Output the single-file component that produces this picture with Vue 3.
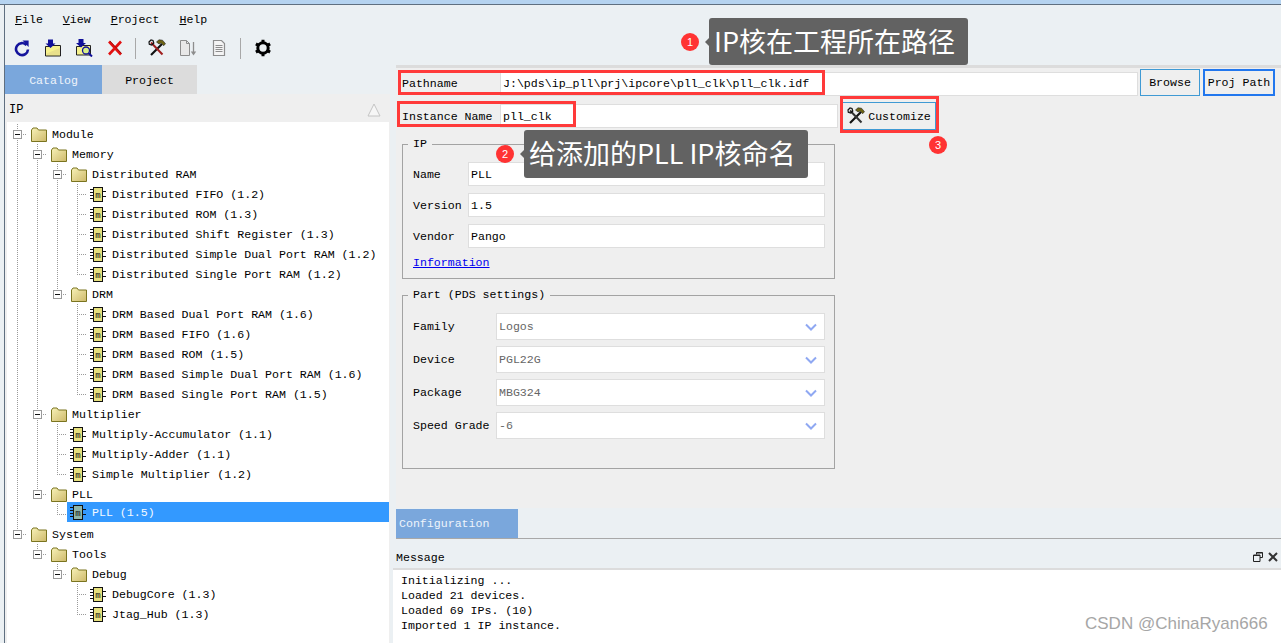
<template>
  <div class="app">
    <div class="desk-strip"></div>
    <div class="window">
      <header class="topbar">
        <nav class="menu">
          <span v-for="m in menus" :key="m" class="menu-item"><u>{{ m[0] }}</u>{{ m.slice(1) }}</span>
        </nav>
        <div class="toolbar">
          <span class="tool">
            <svg width="18" height="18" viewBox="0 0 18 18"><path d="M13.6 6.2A6 6 0 1 0 15 10.5" fill="none" stroke="#14149c" stroke-width="2.6"/><path d="M9.5 1.5 15.6 1.5 15.6 8 Z" fill="#14149c"/></svg>
          </span>
          <span class="tool">
            <svg width="18" height="18" viewBox="0 0 18 18"><path d="M1.5 7.5h5l1-1h9v10.500h-15z" fill="#f6f28c" stroke="#222" stroke-width="1"/><path d="M2.500 14.500 L16 9v7H2.500z" fill="#e8e08a"/><path d="M4 0.500h5v4h2.500L6.500 9 1.500 4.500H4z" fill="#10109a"/></svg>
          </span>
          <span class="tool">
            <svg width="18" height="18" viewBox="0 0 18 18"><path d="M1.500 7.500h5l1-1h8v9.500h-14z" fill="#f6f28c" stroke="#222" stroke-width="1"/><path d="M3.500 0h5v4h2.500L6 8.500 1 4h2.500z" fill="#10109a"/><circle cx="11" cy="11.500" r="3.500" fill="#d8f088" stroke="#10109a" stroke-width="1.300"/><path d="m13.500 14 3.500 3.500" stroke="#10109a" stroke-width="2"/></svg>
          </span>
          <span class="tool">
            <svg width="18" height="18" viewBox="0 0 18 18"><path d="M3 2.500 15 15.500M15 2.500 3 15.500" stroke="#e21010" stroke-width="2.600"/><path d="M4 2 15.500 14.500" stroke="#700" stroke-width=".6"/></svg>
          </span>
          <span class="sep sep-a"></span>
          <span class="tool">
            <svg width="18" height="18" viewBox="0 0 18 18"><path d="M3 16 14 5" stroke="#111" stroke-width="2.200"/><path d="M3 3.500 14.500 15.500" stroke="#a02020" stroke-width="2"/><path d="M8.500 3 11 .8l3.500.4 3 3.500-1.800 2-2.500-2.600-2.200.8z" fill="#6e6414" stroke="#222" stroke-width=".6"/><path d="M1 3 3 1l2 .5.800 2.500-2 2-2.500-.8z" fill="none" stroke="#111" stroke-width="1.200"/></svg>
          </span>
          <span class="tool">
            <svg width="18" height="18" viewBox="0 0 18 18"><path d="M1.500 1.500h6l3 3v12h-9z" fill="#e8e8e8" stroke="#8d8d8d"/><path d="M7.500 1.500v3h3" fill="none" stroke="#8d8d8d"/><path d="M14.500 3v12" stroke="#8d8d8d" stroke-width="1.300"/><path d="M11.800 12.500h5.400L14.500 16.500z" fill="#8d8d8d"/></svg>
          </span>
          <span class="tool">
            <svg width="18" height="18" viewBox="0 0 18 18"><path d="M3.500 1.500h8l3 3v12h-11z" fill="#f4f4f4" stroke="#8d8d8d" stroke-width="1.200"/><path d="M5.500 6.500h7M5.500 8.500h7M5.500 10.500h7M5.500 12.500h7" stroke="#8d8d8d"/></svg>
          </span>
          <span class="sep sep-b"></span>
          <span class="tool">
            <svg width="18" height="18" viewBox="0 0 18 18"><circle cx="9" cy="9" r="5.200" fill="none" stroke="#000" stroke-width="3"/><path d="M9 .8v3.400M9 13.800v3.400M1.900 4.900l2.900 1.700M13.200 11.400l2.900 1.700M1.900 13.100l2.900-1.700M13.200 6.600l2.900-1.700" stroke="#000" stroke-width="3"/></svg>
          </span>
        </div>
      </header>

      <div class="main">
        <aside class="left">
          <div class="tabs">
            <span class="tab tab-on">Catalog</span>
            <span class="tab tab-off">Project</span>
          </div>
          <div class="tree-panel">
            <div class="tree-head">
              <span>IP</span>
              <svg width="14" height="14" viewBox="0 0 14 14"><path d="M7 1 1 13h12z" fill="#f6f6f6" stroke="#c4c4c4"/></svg>
            </div>
            <div class="tree">
              <div v-for="row in rows" :key="row.key" class="row">
                <span v-for="(g, i) in row.guides" :key="i" class="cell" :class="g">
                  <span v-if="row.folder && i === row.guides.length - 1" class="expander"><i></i></span>
                </span>
                <div class="row-body" :class="{ selected: row.selected }">
                  <svg v-if="row.folder" class="folder" width="16" height="15" viewBox="0 0 16 15">
                    <defs>
                      <linearGradient id="fold" x1="0" y1="0" x2="1" y2="1">
                        <stop offset="0" stop-color="#f8f2b8"/>
                        <stop offset="1" stop-color="#cdb96a"/>
                      </linearGradient>
                    </defs>
                    <path d="M.5 3 2 1h4l1.500 2h8v11.500H.5z" fill="url(#fold)" stroke="#7a7420"/>
                  </svg>
                  <svg v-else class="chip" width="16" height="15" viewBox="0 0 16 15">
                    <path d="M0 2.500h3M0 5.500h3M0 8.500h3M0 11.500h3M12 4.500h4M12 9.500h4" stroke="#111"/>
                    <rect x="3.500" y=".5" width="9" height="14" :fill="row.selected ? '#8fb5a8' : '#e6e07c'" stroke="#111"/>
                    <text x="8" y="10.500" text-anchor="middle" font-size="9" font-family="Liberation Mono, monospace" fill="#111">m</text>
                  </svg>
                  <span class="label">{{ row.label }}</span>
                </div>
              </div>
            </div>
          </div>
        </aside>

        <section class="right">
          <div class="config">
            <div class="field-row path-row">
              <label class="row-label">Pathname</label>
              <div class="input path-input">J:\pds\ip_pll\prj\ipcore\pll_clk\pll_clk.idf</div>
              <button class="btn browse">Browse</button>
              <button class="btn proj">Proj Path</button>
            </div>
            <div class="field-row inst-row">
              <label class="row-label">Instance Name</label>
              <div class="input inst-input">pll_clk</div>
              <button class="btn customize">
                <svg width="18" height="18" viewBox="0 0 18 18"><path d="M3 16 14 5" stroke="#111" stroke-width="2.200"/><path d="M3 3.500 14.500 15.500" stroke="#333" stroke-width="2"/><path d="M8.500 3 11 .8l3.500.4 3 3.500-1.800 2-2.500-2.600-2.200.8z" fill="#6e6414" stroke="#222" stroke-width=".6"/><path d="M1 3 3 1l2 .5.800 2.500-2 2-2.500-.8z" fill="none" stroke="#111" stroke-width="1.200"/></svg>
                Customize
              </button>
            </div>

            <fieldset class="group ip-group">
              <legend>IP</legend>
              <div v-for="f in ipFields" :key="f.label" class="ip-field">
                <span class="ip-label">{{ f.label }}</span>
                <div class="input ip-input">{{ f.value }}</div>
              </div>
              <a class="info">Information</a>
            </fieldset>

            <fieldset class="group part-group">
              <legend>Part (PDS settings)</legend>
              <div v-for="f in partFields" :key="f.label" class="part-field">
                <span class="part-label">{{ f.label }}</span>
                <div class="input part-select">
                  <span>{{ f.value }}</span>
                  <svg width="12" height="8" viewBox="0 0 12 8"><path d="M1 1.500 6 6.500 11 1.500" fill="none" stroke="#8fa8f2" stroke-width="2"/></svg>
                </div>
              </div>
            </fieldset>
          </div>

          <div class="config-tabs">
            <span class="tab-config">Configuration</span>
          </div>

          <div class="msg-head">
            <span>Message</span>
            <div class="msg-icons">
              <svg width="10" height="10" viewBox="0 0 10 10"><path d="M3.500 2.500V.5h6v5h-2.500M.5 3h6.500v6.500H.5z" fill="none" stroke="#222"/><path d="M.5 3.500h6.500M3.500 1h6" stroke="#222"/></svg>
              <svg width="10" height="10" viewBox="0 0 10 10"><path d="M1 1l8 8M9 1 1 9" stroke="#333" stroke-width="2"/></svg>
            </div>
          </div>
          <div class="msg-body">
            <div v-for="line in messages" :key="line">{{ line }}</div>
          </div>
        </section>
      </div>
    </div>

    <!-- 标注层 -->
    <div class="mark mark-path"></div>
    <div class="mark mark-inst"></div>
    <div class="mark mark-custom"></div>
    <span class="dot dot-1">1</span>
    <span class="dot dot-2">2</span>
    <span class="dot dot-3">3</span>
    <div class="tip tip-1">IP核在工程所在路径</div>
    <div class="tip tip-2">给添加的PLL IP核命名</div>
    <div class="watermark">CSDN @ChinaRyan666</div>
  </div>
</template>

<script setup>
import { computed } from 'vue'

const menus = ['File', 'View', 'Project', 'Help']

const leaf = label => ({ label })
const tree = [
  { label: 'Module', children: [
    { label: 'Memory', children: [
      { label: 'Distributed RAM', children: [
        leaf('Distributed FIFO (1.2)'),
        leaf('Distributed ROM (1.3)'),
        leaf('Distributed Shift Register (1.3)'),
        leaf('Distributed Simple Dual Port RAM (1.2)'),
        leaf('Distributed Single Port RAM (1.2)')
      ] },
      { label: 'DRM', children: [
        leaf('DRM Based Dual Port RAM (1.6)'),
        leaf('DRM Based FIFO (1.6)'),
        leaf('DRM Based ROM (1.5)'),
        leaf('DRM Based Simple Dual Port RAM (1.6)'),
        leaf('DRM Based Single Port RAM (1.5)')
      ] }
    ] },
    { label: 'Multiplier', children: [
      leaf('Multiply-Accumulator (1.1)'),
      leaf('Multiply-Adder (1.1)'),
      leaf('Simple Multiplier (1.2)')
    ] },
    { label: 'PLL', children: [
      { label: 'PLL (1.5)', selected: true }
    ] }
  ] },
  { label: 'System', children: [
    { label: 'Tools', children: [
      { label: 'Debug', children: [
        leaf('DebugCore (1.3)'),
        leaf('Jtag_Hub (1.3)')
      ] }
    ] }
  ] }
]

// 把树展开成平铺的行，顺便算出每一列的虚线类型
const rows = computed(() => {
  const out = []
  const walk = (nodes, prefix) => {
    nodes.forEach((n, i) => {
      const last = i === nodes.length - 1
      out.push({
        key: out.length,
        label: n.label,
        selected: n.selected,
        folder: !!n.children,
        guides: [...prefix, last ? 'ell' : 'tee']
      })
      if (n.children) walk(n.children, [...prefix, last ? 'blank' : 'pipe'])
    })
  }
  walk(tree, [])
  return out
})

const ipFields = [
  { label: 'Name', value: 'PLL' },
  { label: 'Version', value: '1.5' },
  { label: 'Vendor', value: 'Pango' }
]

const partFields = [
  { label: 'Family', value: 'Logos' },
  { label: 'Device', value: 'PGL22G' },
  { label: 'Package', value: 'MBG324' },
  { label: 'Speed Grade', value: '-6' }
]

const messages = [
  'Initializing ...',
  'Loaded 21 devices.',
  'Loaded 69 IPs. (10)',
  'Imported 1 IP instance.'
]
</script>

<style>
html, body { margin: 0; overflow: hidden; background: #fff; }
</style>

<style scoped>
.app {
  position: relative;
  width: 1281px;
  height: 643px;
  overflow: hidden;
  font-family: "Liberation Mono", monospace;
  font-size: 11.6px;
  color: #000;
  background: #ebf0f3;
}

.desk-strip {
  height: 4px;
  background: #b5d3f0;
  border-bottom: 1px solid #5f6f80;
}

.window {
  height: 638px;
  margin-left: 4px;
  border-left: 1px solid #5f6f80;
  display: flex;
  flex-direction: column;
}

.topbar { height: 60px; flex-shrink: 0; }

.menu {
  display: flex;
  gap: 20px;
  padding: 8px 0 0 10px;
  height: 20px;
  line-height: 13px;
}

.toolbar {
  display: flex;
  align-items: center;
  height: 32px;
  margin-top: -1px;
  padding-left: 1px;
}

.tool {
  width: 31px;
  display: flex;
  justify-content: center;
}

.sep {
  width: 1px;
  height: 21px;
  background: #a8a8a8;
}
.sep-a { margin: 0 5px; }
.sep-b { margin: 0 6px 0 6px; }

.main { flex: 1; display: flex; min-height: 0; }

.left {
  width: 385px;
  flex-shrink: 0;
  display: flex;
  flex-direction: column;
}

.tabs { display: flex; height: 29px; flex-shrink: 0; }

.tab {
  display: flex;
  align-items: center;
  justify-content: center;
  padding-top: 1px;
  box-sizing: border-box;
}
.tab-on { width: 97px; background: #7aa7dc; color: #eef4fb; }
.tab-off { width: 95px; background: #dcdcdc; }

.tree-panel {
  flex: 1;
  min-height: 0;
  padding: 3px 1px 0 2px;
  background: #efefef;
  display: flex;
  flex-direction: column;
}

.tree-head {
  height: 25px;
  flex-shrink: 0;
  display: flex;
  align-items: center;
  justify-content: space-between;
  padding: 0 8px 0 2px;
  font-size: 12px;
}

.tree {
  flex: 1;
  min-height: 0;
  padding-top: 2px;
  overflow: hidden;
  background: #fff;
}

.row { display: flex; height: 20px; }

.cell {
  width: 20px;
  height: 20px;
  flex-shrink: 0;
  display: flex;
  align-items: center;
  justify-content: center;
  --dots: repeating-linear-gradient(#9a9a9a 0 1px, transparent 1px 2px);
  --dash: repeating-linear-gradient(90deg, #9a9a9a 0 1px, transparent 1px 2px);
}
.cell.pipe { background: var(--dots) 10px 0 / 1px 100% no-repeat; }
.cell.tee {
  background:
    var(--dots) 10px 0 / 1px 100% no-repeat,
    var(--dash) 10px 10px / 10px 1px no-repeat;
}
.cell.ell {
  background:
    var(--dots) 10px 0 / 1px 10px no-repeat,
    var(--dash) 10px 10px / 10px 1px no-repeat;
}

.expander {
  width: 7px;
  height: 7px;
  margin-left: 1px;
  background: #fff;
  border: 1px solid #9a9a9a;
  display: flex;
  align-items: center;
  justify-content: center;
}
.expander i { width: 5px; height: 1px; background: #111; }

.row-body {
  flex: 1;
  display: flex;
  align-items: center;
  min-width: 0;
  padding-left: 3px;
}
.row-body.selected {
  align-self: flex-start;
  height: 20px;
  margin-top: -2px;
  padding-top: 1px;
  box-sizing: border-box;
  background: #3399ff;
  color: #f4faff;
}

.folder { margin-left: 1px; margin-right: 5px; flex-shrink: 0; }
.chip { margin-right: 6px; flex-shrink: 0; }
.label { white-space: pre; }

.right {
  width: 885px;
  margin-left: 6px;
  display: flex;
  flex-direction: column;
  min-width: 0;
}

.config {
  height: 443px;
  flex-shrink: 0;
  box-sizing: border-box;
  background: #efefef;
  border-top: 3px solid #dcdcdc;
  padding-top: 1px;
}

.field-row { display: flex; align-items: center; }
.path-row { height: 27px; }
.path-row .row-label, .path-row .input { margin-top: 2px; }
.inst-row { height: 28px; margin-top: 6px; }

.row-label { width: 98px; padding-left: 6px; flex-shrink: 0; }

.input {
  box-sizing: border-box;
  background: #fff;
  border: 1px solid #dedede;
  padding: 0 2px;
  display: flex;
  align-items: center;
}
.path-input { width: 638px; height: 24px; }
.inst-input { width: 338px; height: 24px; }

.btn {
  box-sizing: border-box;
  font: inherit;
  color: inherit;
  background: #efefef;
  padding: 0;
  height: 27px;
}
.browse { width: 60px; margin-left: 2px; border: 1px solid #3f9ad4; }
.proj { width: 72px; margin-left: 3px; border: 2px solid #2277ee; }
.customize {
  width: 94px;
  height: 28px;
  margin-left: 4px;
  border: 1px solid #3f9ad4;
  display: flex;
  align-items: center;
  justify-content: center;
  gap: 3px;
}

.group {
  width: 433px;
  box-sizing: border-box;
  margin: 0 0 0 6px;
  padding: 0 9px 0 10px;
  border: 1px solid #a3a3a3;
}
.group legend { padding: 0 5px; margin-left: -5px; line-height: 14px; }

.ip-group { height: 142px; margin-top: 7px; }
.part-group { height: 181px; margin-top: 9px; }

.ip-field {
  display: flex;
  align-items: center;
  height: 24px;
  margin-bottom: 7px;
}
.ip-field:first-of-type { margin-top: 11px; }
.ip-label { width: 55px; flex-shrink: 0; }
.ip-input { flex: 1; height: 24px; }

.info { display: block; margin-top: 8px; color: #0000ee; text-decoration: underline; }

.part-field {
  display: flex;
  align-items: center;
  height: 27px;
  margin-bottom: 6px;
}
.part-field:first-of-type { margin-top: 11px; }
.part-label { width: 83px; flex-shrink: 0; }
.part-select {
  flex: 1;
  height: 27px;
  justify-content: space-between;
  padding-right: 7px;
  color: #666;
}

.config-tabs {
  height: 31px;
  flex-shrink: 0;
  border-bottom: 1px solid #a8a8a8;
  box-sizing: border-box;
  padding-top: 1px;
}
.tab-config {
  display: flex;
  align-items: center;
  width: 122px;
  height: 29px;
  padding-left: 3px;
  box-sizing: border-box;
  background: #7aa7dc;
  color: #eef4fb;
}

.msg-head {
  height: 29px;
  flex-shrink: 0;
  display: flex;
  align-items: center;
  justify-content: space-between;
  padding: 7px 3px 0 0;
  box-sizing: border-box;
}
.msg-icons { display: flex; gap: 5px; }

.msg-body {
  flex: 1;
  min-height: 0;
  background: #fff;
  border-top: 2px solid #dcdcdc;
  margin-left: -3px;
  padding: 3px 0 0 8px;
  line-height: 15px;
}

.mark {
  position: absolute;
  box-sizing: border-box;
  border: 3px solid #ff3a3a;
}
.mark-path { left: 398px; top: 70px; width: 427px; height: 25px; }
.mark-inst { left: 397px; top: 101px; width: 179px; height: 26px; }
.mark-custom { left: 840px; top: 96px; width: 99px; height: 37px; }

.dot {
  position: absolute;
  width: 18px;
  height: 18px;
  border-radius: 50%;
  background: #ff3333;
  color: #fff;
  font: 11px/18px "Liberation Sans", sans-serif;
  text-align: center;
}
.dot-1 { left: 681px; top: 33px; }
.dot-2 { left: 496px; top: 145px; }
.dot-3 { left: 929px; top: 136px; }

.tip {
  position: absolute;
  box-sizing: border-box;
  height: 47px;
  padding-left: 5px;
  border-radius: 3px;
  background: #626262;
  color: #fff;
  font: 27px/46px "Noto Sans CJK SC", sans-serif;
  white-space: nowrap;
}
.tip::before {
  content: "";
  position: absolute;
  left: -4px;
  top: 20px;
  border: 4px solid transparent;
  border-left: 0;
  border-right-color: #626262;
}
.tip-1 { left: 709px; top: 18px; width: 259px; }
.tip-2 { left: 524px; top: 130px; width: 284px; height: 48px; }

.watermark {
  position: absolute;
  left: 1085px;
  top: 614px;
  color: #a6a6a6;
  font: 17px/20px "Liberation Sans", sans-serif;
}
</style>
